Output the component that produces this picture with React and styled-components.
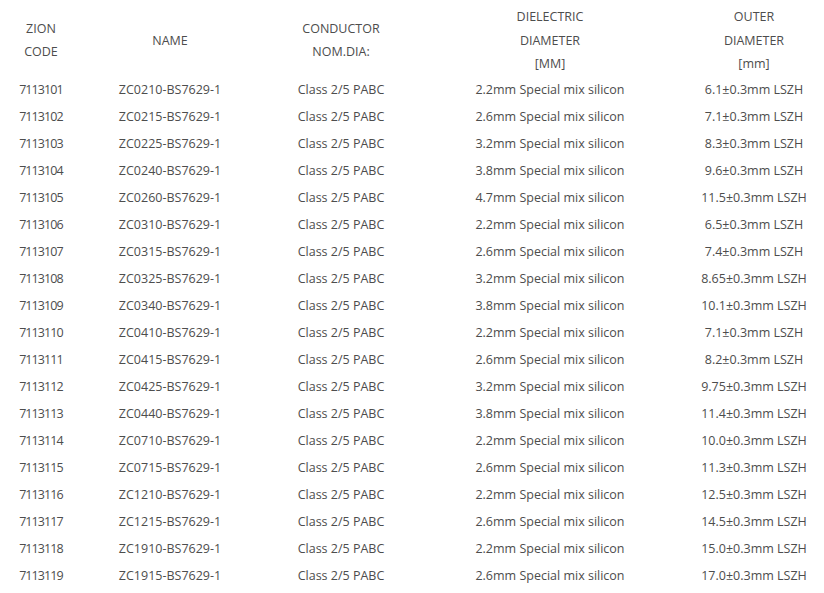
import React from 'react'
import styled, { createGlobalStyle } from 'styled-components'

const GlobalStyle = createGlobalStyle`
  html, body {
    margin: 0;
    padding: 0;
    background: #fff;
    overflow: hidden;
  }
  body {
    font-family: 'Open Sans', 'Noto Sans', sans-serif;
    color: #4d4d4d;
  }
`

const Table = styled.table`
  border-collapse: collapse;
  margin-top: 4px;
  table-layout: fixed;
  width: 824px;
  font-size: 12.5px;
  font-weight: 400;
`

const HeadCell = styled.th`
  font-weight: 400;
  line-height: 23.6px;
  padding: 1px 0 0;
  padding-left: ${p => p.$shift || 0}px;
  text-align: center;
  vertical-align: middle;
  width: ${p => p.$w}px;
`

const Cell = styled.td`
  height: 27px;
  padding: 0;
  padding-left: ${p => p.$shift || 0}px;
  text-align: center;
  vertical-align: middle;
  white-space: nowrap;
  letter-spacing: ${p => (p.$tight ? '-0.9px' : 'normal')};
`

const columns = [
  { w: 82, label: ['ZION', 'CODE'] },
  { w: 176, label: ['NAME'] },
  { w: 166, label: ['CONDUCTOR', 'NOM.DIA:'] },
  { w: 252, label: ['DIELECTRIC', 'DIAMETER', '[MM]'] },
  { w: 148, label: ['OUTER', 'DIAMETER', '[mm]'], shift: 4 },
]

const rows = [
  ['7113101', 'ZC0210-BS7629-1', '2.2', '6.1'],
  ['7113102', 'ZC0215-BS7629-1', '2.6', '7.1'],
  ['7113103', 'ZC0225-BS7629-1', '3.2', '8.3'],
  ['7113104', 'ZC0240-BS7629-1', '3.8', '9.6'],
  ['7113105', 'ZC0260-BS7629-1', '4.7', '11.5'],
  ['7113106', 'ZC0310-BS7629-1', '2.2', '6.5'],
  ['7113107', 'ZC0315-BS7629-1', '2.6', '7.4'],
  ['7113108', 'ZC0325-BS7629-1', '3.2', '8.65'],
  ['7113109', 'ZC0340-BS7629-1', '3.8', '10.1'],
  ['7113110', 'ZC0410-BS7629-1', '2.2', '7.1'],
  ['7113111', 'ZC0415-BS7629-1', '2.6', '8.2'],
  ['7113112', 'ZC0425-BS7629-1', '3.2', '9.75'],
  ['7113113', 'ZC0440-BS7629-1', '3.8', '11.4'],
  ['7113114', 'ZC0710-BS7629-1', '2.2', '10.0'],
  ['7113115', 'ZC0715-BS7629-1', '2.6', '11.3'],
  ['7113116', 'ZC1210-BS7629-1', '2.2', '12.5'],
  ['7113117', 'ZC1215-BS7629-1', '2.6', '14.5'],
  ['7113118', 'ZC1910-BS7629-1', '2.2', '15.0'],
  ['7113119', 'ZC1915-BS7629-1', '2.6', '17.0'],
]

const App = () => (
  <>
    <GlobalStyle />
    <Table>
      <thead>
        <tr>
          {columns.map((c, i) => (
            <HeadCell key={i} $w={c.w} $shift={c.shift}>
              {c.label.map((l, j) => (
                <div key={j}>{l}</div>
              ))}
            </HeadCell>
          ))}
        </tr>
      </thead>
      <tbody>
        {rows.map(([code, name, diel, outer]) => (
          <tr key={code}>
            <Cell $tight>{code}</Cell>
            <Cell>{name}</Cell>
            <Cell>Class 2/5 PABC</Cell>
            <Cell>{diel}mm Special mix silicon</Cell>
            <Cell $shift={4}>{outer}±0.3mm LSZH</Cell>
          </tr>
        ))}
      </tbody>
    </Table>
  </>
)

export default App
